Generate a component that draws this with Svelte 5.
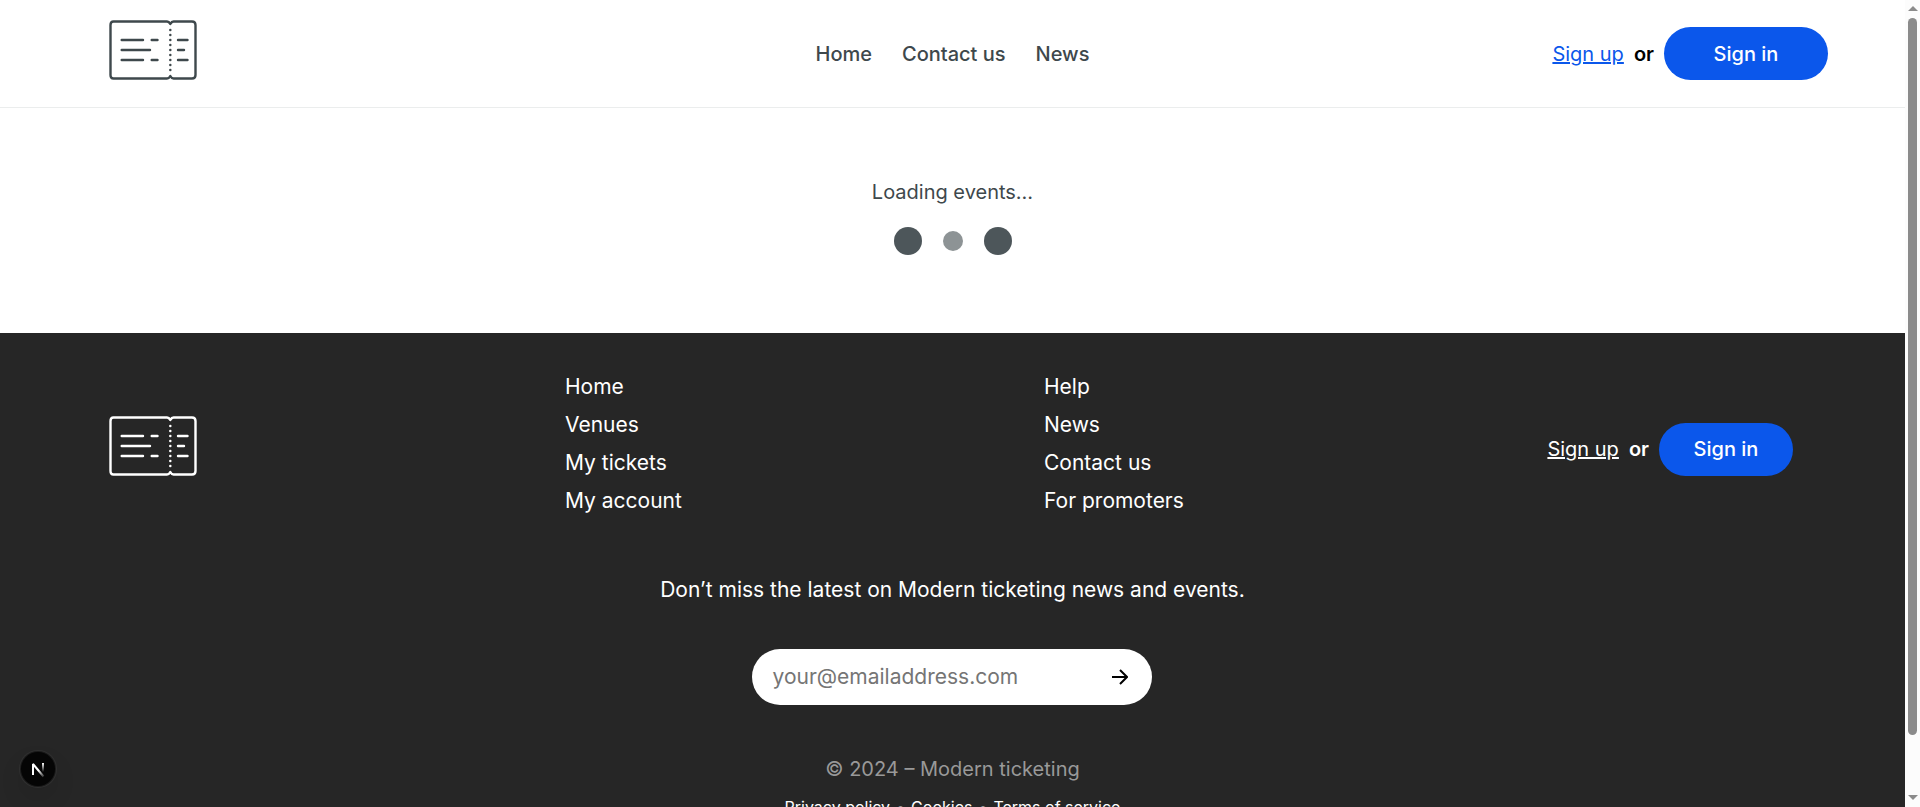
<script>
  const navLinks = ['Home', 'Contact us', 'News'];
  const siteLinks = ['Home', 'Venues', 'My tickets', 'My account'];
  const helpLinks = ['Help', 'News', 'Contact us', 'For promoters'];
  const legalLinks = ['Privacy policy', 'Cookies', 'Terms of service'];
  const perforation = [10, 15, 20, 25, 30, 35, 40, 45, 50];
  let email = $state('');
</script>

{#snippet ticket()}
  <svg class="ticket" viewBox="0 0 88 60" aria-hidden="true">
    <path
      d="M4.500 1.500H58Q60 1.500 61.300 4Q62.600 1.500 64.600 1.500H83Q86.500 1.500 86.500 5V55Q86.500 58.500 83 58.500H64.600Q62.600 58.500 61.300 56Q60 58.500 58 58.500H4.500Q1.500 58.500 1.500 55V5Q1.500 1.500 4.500 1.500Z"
      fill="none" stroke="currentColor" stroke-width="2.400" stroke-linejoin="round" />
    <path
      d="M12.700 20H34M42.700 20H48.500M12.700 30H41M12.700 40H34M42.700 40H48.500M69 20H78.500M69 30H75M69 40H78.500"
      fill="none" stroke="currentColor" stroke-width="2.400" stroke-linecap="round" />
    {#each perforation as y}
      <circle cx="61.300" cy={y} r="1.250" fill="currentColor" />
    {/each}
  </svg>
{/snippet}

<div class="shell">
  <div class="page">
    <header>
      <a class="logo" href="#home" aria-label="Modern ticketing">{@render ticket()}</a>
      <nav>
        {#each navLinks as label}<a href="#nav">{label}</a>{/each}
      </nav>
      <div class="auth">
        <a href="#signup">Sign up</a>
        <span>or</span>
        <button type="button">Sign in</button>
      </div>
    </header>

    <main>
      <p>Loading events…</p>
      <div class="dots"><i></i><i class="small"></i><i></i></div>
    </main>

    <footer>
      <div class="columns">
        <a class="logo" href="#home" aria-label="Modern ticketing">{@render ticket()}</a>
        <ul>
          {#each siteLinks as label}<li><a href="#site">{label}</a></li>{/each}
        </ul>
        <ul>
          {#each helpLinks as label}<li><a href="#help">{label}</a></li>{/each}
        </ul>
        <div class="auth">
          <a href="#signup">Sign up</a>
          <span>or</span>
          <button type="button">Sign in</button>
        </div>
      </div>

      <form onsubmit={(e) => e.preventDefault()}>
        <label for="email">Don’t miss the latest on Modern ticketing news and events.</label>
        <div class="field">
          <input id="email" type="email" placeholder="your@emailaddress.com" bind:value={email} />
          <button type="submit" aria-label="Subscribe">
            <svg viewBox="0 0 16 16" aria-hidden="true">
              <path d="M0 8H15M8 1L15 8L8 15" fill="none" stroke="#000" stroke-width="2" />
            </svg>
          </button>
        </div>
      </form>

      <p class="copyright">© 2024 – Modern ticketing</p>
      <div class="legal">
        {#each legalLinks as label, i}
          {#if i > 0}<span>•</span>{/if}
          <a href="#legal">{label}</a>
        {/each}
      </div>
    </footer>
  </div>

  <div class="scrollbar" aria-hidden="true">
    <svg viewBox="0 0 10 6"><path d="M5 0L10 5H0Z" fill="#8b8b8b" /></svg>
    <div class="track"><div class="thumb"></div></div>
    <svg viewBox="0 0 10 6"><path d="M0 0H10L5 5Z" fill="#8b8b8b" /></svg>
  </div>

  <button class="devtools" type="button" aria-label="Open developer tools">
    <svg viewBox="0 0 34 34" aria-hidden="true">
      <defs>
        <linearGradient id="fade-stem" x1="0" y1="11" x2="0" y2="20" gradientUnits="userSpaceOnUse">
          <stop offset="0" stop-color="#fff" />
          <stop offset="1" stop-color="#fff" stop-opacity="0" />
        </linearGradient>
        <linearGradient id="fade-diagonal" x1="18" y1="18" x2="23" y2="24" gradientUnits="userSpaceOnUse">
          <stop offset="0" stop-color="#fff" />
          <stop offset="1" stop-color="#fff" stop-opacity="0.200" />
        </linearGradient>
      </defs>
      <path d="M12 23V12L22.500 24.500" fill="none" stroke="url(#fade-diagonal)" stroke-width="2" stroke-linejoin="bevel" />
      <path d="M22 11V21" stroke="url(#fade-stem)" stroke-width="2" />
    </svg>
  </button>
</div>

<style>
  :global(body) {
    margin: 0;
    background: #fff;
  }
  .shell {
    display: flex;
    height: 100vh;
    overflow: hidden;
    font-family: Inter, 'Open Sans', sans-serif;
    font-size: 20px;
    line-height: 30px;
    color: #3e484c;
  }
  .page {
    flex: 1;
    min-width: 0;
  }
  a {
    color: inherit;
    text-decoration: none;
  }
  p,
  ul {
    margin: 0;
    padding: 0;
    list-style: none;
  }
  button,
  input {
    font: inherit;
    border: 0;
    padding: 0;
  }
  .logo,
  .ticket {
    display: block;
    width: 88px;
  }
  header {
    display: grid;
    grid-template-columns: 1fr auto 1fr;
    align-items: center;
    height: 107px;
    padding: 0 77px;
    border-bottom: 1px solid #ebeded;
    font-weight: 500;
  }
  header .logo {
    margin: 0 32px 7px;
  }
  nav {
    display: flex;
    gap: 30px;
  }
  .auth {
    display: flex;
    align-items: center;
    justify-content: flex-end;
    gap: 10px;
    font-weight: 500;
    color: #000;
    white-space: nowrap;
  }
  .auth a {
    color: #0b57eb;
    font-weight: 400;
    text-decoration: underline;
  }
  .auth span {
    font-weight: 600;
  }
  .auth button {
    width: 164px;
    height: 53px;
    border-radius: 27px;
    background: #0b57eb;
    color: #fff;
  }
  main {
    display: flex;
    flex-direction: column;
    align-items: center;
    gap: 20px;
    padding: 69px 0 78px;
  }
  .dots {
    display: flex;
    align-items: center;
    justify-content: space-between;
    width: 118px;
  }
  .dots i {
    width: 28px;
    height: 28px;
    border-radius: 50%;
    background: #4d565a;
  }
  .dots .small {
    width: 20px;
    height: 20px;
    background: #8d9395;
  }
  footer {
    display: flex;
    flex-direction: column;
    align-items: center;
    padding-top: 35px;
    background: #262626;
    color: #fff;
  }
  .columns {
    box-sizing: border-box;
    width: 100%;
    display: grid;
    grid-template-columns: 93px 116px 140px 246px;
    justify-content: space-between;
    align-items: center;
    padding: 0 112px 0 109px;
    white-space: nowrap;
  }
  ul,
  form {
    font-size: 21px;
  }
  li {
    line-height: 38px;
  }
  footer .logo {
    margin-top: 4px;
  }
  footer .auth {
    margin-top: 10px;
    color: #fff;
  }
  footer .auth a {
    color: #fff;
  }
  footer .auth button {
    width: 134px;
  }
  form {
    display: flex;
    flex-direction: column;
    align-items: center;
    gap: 44px;
    margin: 55px 0 49px;
  }
  .field {
    box-sizing: border-box;
    display: flex;
    align-items: center;
    width: 400px;
    height: 56px;
    padding: 0 24px 0 20px;
    border-radius: 28px;
    background: #fff;
  }
  input {
    flex: 1;
    min-width: 0;
    background: none;
    outline: 0;
    color: #262626;
  }
  input::placeholder {
    color: #757575;
  }
  .field button {
    background: none;
  }
  .field svg {
    display: block;
    width: 16px;
  }
  .copyright {
    color: #999;
  }
  .legal {
    display: flex;
    gap: 6px;
    margin-top: 8px;
    padding-bottom: 40px;
    font-size: 16px;
  }
  .legal span {
    color: #999;
  }
  .scrollbar {
    box-sizing: border-box;
    display: flex;
    flex-direction: column;
    align-items: center;
    width: 15px;
    padding: 6px 0;
    background: #fcfcfc;
  }
  .scrollbar svg {
    width: 10px;
    height: 6px;
  }
  .track {
    flex: 1;
    padding: 6px 0;
  }
  .thumb {
    width: 9px;
    height: 93%;
    border-radius: 5px;
    background: #8b8b8b;
  }
  .devtools {
    position: fixed;
    left: 21px;
    bottom: 21px;
    width: 34px;
    height: 34px;
    border-radius: 50%;
    background: #050505;
    box-shadow:
      0 0 0 1px #1a1a1a,
      0 0 0 2px #303030,
      0 12px 24px rgba(0, 0, 0, 0.1);
  }
  .devtools svg {
    display: block;
  }
</style>
